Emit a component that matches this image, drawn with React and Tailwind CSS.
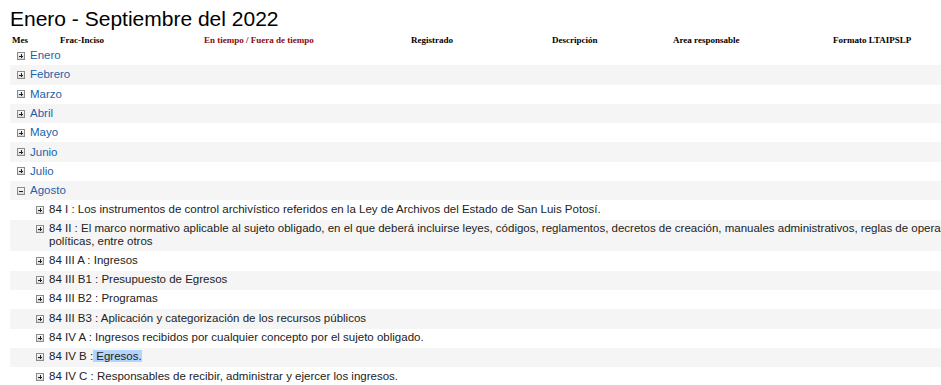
import React from "react";

const MONTHS = ["Enero", "Febrero", "Marzo", "Abril", "Mayo", "Junio", "Julio", "Agosto"];

const ITEMS = [
  ["84 I : Los instrumentos de control archivístico referidos en la Ley de Archivos del Estado de San Luis Potosí."],
  [
    "84 II : El marco normativo aplicable al sujeto obligado, en el que deberá incluirse leyes, códigos, reglamentos, decretos de creación, manuales administrativos, reglas de operación,",
    "políticas, entre otros",
  ],
  ["84 III A : Ingresos"],
  ["84 III B1 : Presupuesto de Egresos"],
  ["84 III B2 : Programas"],
  ["84 III B3 : Aplicación y categorización de los recursos públicos"],
  ["84 IV A : Ingresos recibidos por cualquier concepto por el sujeto obligado."],
  ["84 IV B :"],
  ["84 IV C : Responsables de recibir, administrar y ejercer los ingresos."],
];

// cajita +/- del árbol
function ToggleIcon({ open = false }) {
  return (
    <svg width="8" height="8" viewBox="0 0 8 8" shapeRendering="crispEdges" className="shrink-0">
      <defs>
        <linearGradient id="tg" x1="0" y1="0" x2="0" y2="1">
          <stop offset="0" stopColor="#fbfbfb" />
          <stop offset="1" stopColor="#d8d8d8" />
        </linearGradient>
      </defs>
      <rect x="0.5" y="0.5" width="7" height="7" fill="url(#tg)" stroke="#8a8a8a" />
      <line x1="2" y1="4" x2="6" y2="4" stroke="#222" />
      {!open && <line x1="4" y1="2" x2="4" y2="6" stroke="#222" />}
    </svg>
  );
}

export default function App() {
  return (
    <div className="w-[941px] h-[385px] overflow-hidden bg-white font-['Liberation_Sans',Arial,sans-serif]">
      <h1 className="pl-[10px] pt-[7px] text-[21px] leading-[23px] text-black font-normal whitespace-nowrap">
        Enero - Septiembre del 2022
      </h1>

      <div className="mt-[3px] h-[13px] flex items-center pl-[12px] font-['Liberation_Serif',serif] font-bold text-[9px] leading-[12px] text-black whitespace-nowrap">
        <span className="w-[48px]">Mes</span>
        <span className="w-[144px]">Frac-Inciso</span>
        <span className="w-[207px] text-[#8b0a0a]">En tiempo / Fuera de tiempo</span>
        <span className="w-[141px]">Registrado</span>
        <span className="w-[121px]">Descripción</span>
        <span className="w-[160px]">Area responsable</span>
        <span>Formato LTAIPSLP</span>
      </div>

      <div className="ml-[10px] w-[1100px]">
        {MONTHS.map((m, i) => (
          <div
            key={m}
            className={`h-[19.3px] flex items-center gap-[5px] pl-[7px] text-[11.5px] text-[#1b62ab] ${
              i % 2 === 1 ? "bg-[#f5f5f5]" : ""
            }`}
          >
            <ToggleIcon open={m === "Agosto"} />
            <span>{m}</span>
          </div>
        ))}

        {ITEMS.map((lines, i) => (
          <div
            key={i}
            className={`flex items-start gap-[5px] pl-[26px] pt-[3.4px] pb-[4.4px] text-[11.5px] leading-[11.5px] text-[#222] whitespace-nowrap ${
              i % 2 === 1 ? "bg-[#f5f5f5]" : ""
            }`}
          >
            <div className="mt-[2px]">
              <ToggleIcon />
            </div>
            <div>
              {lines.map((l, j) => (
                <div key={j} className={j > 0 ? "mt-[1px]" : ""}>
                  {l}
                  {l === "84 IV B :" && <span className="bg-[#b3d4fc]"> Egresos.</span>}
                </div>
              ))}
            </div>
          </div>
        ))}
      </div>
    </div>
  );
}
